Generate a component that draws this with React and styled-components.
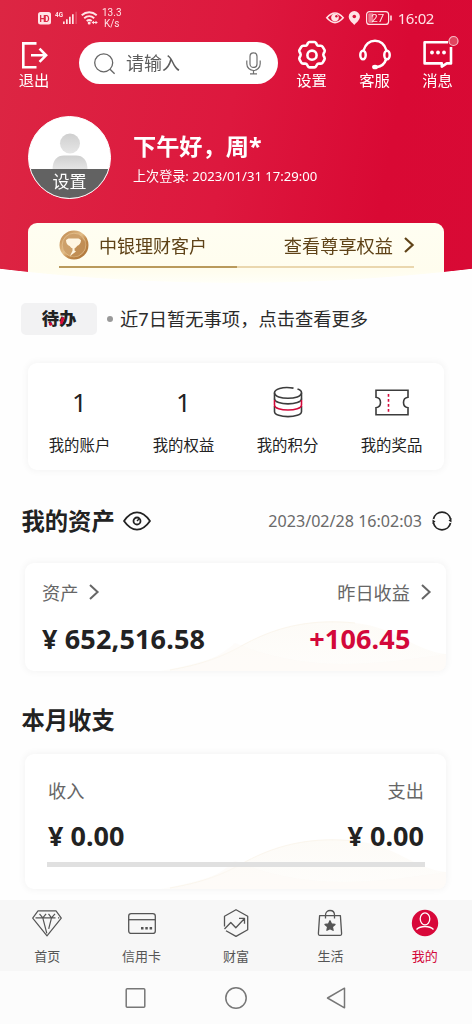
import React from "react";
import styled, { createGlobalStyle } from "styled-components";

const GlobalStyle = createGlobalStyle`
  * {
    box-sizing: border-box;
  }
  body {
    margin: 0;
    background: #fefefe;
    font-family: "Noto Sans", "Noto Sans CJK SC", sans-serif;
    color: #222222;
  }
  svg {
    display: block;
    flex: none;
    overflow: visible;
  }
`;

const Page = styled.div`
  display: flex;
  flex-direction: column;
  width: 472px;
  height: 1024px;
  overflow: hidden;
  background: #fefefe;
  white-space: nowrap;
`;

const Header = styled.header`
  height: 283px;
  flex: none;
  overflow: hidden;
  background: linear-gradient(100deg, #dc2643 0%, #dd183e 48%, #d90934 80%, #d80a35 100%);
  mask-image: radial-gradient(circle 2000px at 50% calc(100% - 1990px), #000 1989.4px, transparent 1990.2px);
`;

const StatusBar = styled.div`
  display: flex;
  align-items: center;
  height: 36px;
  padding: 0 38px;
  color: #ffe3e6;
`;

const StatusSpacer = styled.div`
  flex: 1;
`;

const NetSpeed = styled.div`
  font-family: Roboto, sans-serif;
  font-size: 10px;
  line-height: 11px;
  text-align: center;
  margin-left: 4px;
`;

const Clock = styled.span`
  font-size: 15px;
  line-height: 20px;
  letter-spacing: -0.4px;
  margin-left: 6px;
`;

const TopBar = styled.div`
  display: flex;
  height: 54px;
  padding: 3px 0 0 4px;
`;

const TopAction = styled.button`
  display: flex;
  flex-direction: column;
  align-items: center;
  width: ${(p) => p.$width || 63}px;
  padding: 0;
  border: 0;
  background: none;
  color: #ffffff;
  font-family: inherit;
  font-size: 15.3px;
  font-weight: 400;
  line-height: 18px;
`;

const SearchBox = styled.div`
  display: flex;
  align-items: center;
  width: 199px;
  height: 42px;
  margin: 3px 2px 0 15px;
  padding: 0 17px 0 15px;
  border-radius: 21px;
  background: #ffffff;
`;

const SearchText = styled.span`
  flex: 1;
  margin-left: 11px;
  font-size: 18px;
  line-height: 24px;
  color: #5c5c5c;
`;

const Profile = styled.div`
  display: flex;
  padding: 26px 28px 0;
  color: #ffffff;
`;

const Avatar = styled.div`
  display: flex;
  flex-direction: column;
  align-items: center;
  justify-content: space-between;
  width: 83px;
  height: 83px;
  overflow: hidden;
  border: 1.5px solid #ffffff;
  border-radius: 50%;
  background: #ffffff;
`;

const AvatarLabel = styled.div`
  width: 100%;
  height: 29px;
  background: #626262;
  font-size: 17px;
  line-height: 25px;
  text-align: center;
`;

const Greeting = styled.div`
  padding: 14px 0 0 22px;
`;

const Hello = styled.div`
  font-size: 23.2px;
  font-weight: 700;
  line-height: 32px;
`;

const LastLogin = styled.div`
  margin-top: 4px;
  font-size: 13.1px;
  line-height: 20px;
`;

const MemberCard = styled.div`
  height: 70px;
  margin: 24px 28px 0;
  padding: 0 30px 0 31px;
  border-radius: 9px 9px 0 0;
  background: linear-gradient(180deg, #fffef2 0%, #fffdee 68%, #fffff8 86%);
`;

const MemberRow = styled.div`
  display: flex;
  align-items: center;
  height: 43px;
  color: #5f4318;
  font-size: 18px;
`;

const MemberName = styled.span`
  flex: 1;
  margin-left: 10px;
`;

const MemberLink = styled.span`
  margin-right: 11px;
  font-size: 18.2px;
`;

const MemberLine = styled.div`
  height: 1.5px;
  background: linear-gradient(90deg, #b99a5c 50%, #ead7ae 50%);
`;

const Todo = styled.div`
  display: flex;
  align-items: center;
  height: 32px;
  flex: none;
  margin: 20px 21px 0;
`;

const TodoBadge = styled.div`
  position: relative;
  width: 76px;
  height: 32px;
  border-radius: 5px;
  background: #f2f2f3;
  font-size: 17.3px;
  font-weight: 900;
  line-height: 32px;
  text-align: center;
`;

const TodoAccent = styled.svg`
  position: absolute;
  left: 0;
  top: 0;
`;

const Bullet = styled.i`
  width: 6px;
  height: 6px;
  margin: 0 7px 0 10px;
  border-radius: 50%;
  background: #999999;
`;

const TodoText = styled.span`
  font-size: 18.3px;
  line-height: 26px;
  color: #2b2b2b;
`;

const Card = styled.section`
  position: relative;
  flex: none;
  border-radius: 9px;
  background: #ffffff;
  box-shadow: 0 0 6px 2px rgba(0, 0, 0, 0.035);
`;

const QuickCard = styled(Card)`
  display: grid;
  grid-template-columns: repeat(4, 104px);
  height: 107px;
  margin: 28px 28px 0 27.5px;
`;

const QuickItem = styled.div`
  display: flex;
  flex-direction: column;
  align-items: center;
  padding-top: 19px;
  font-size: 15.4px;
  line-height: 24px;
`;

const QuickTop = styled.div`
  display: flex;
  align-items: center;
  height: 40px;
  margin-bottom: 12px;
  font-size: 26px;
`;

const TitleRow = styled.div`
  display: flex;
  align-items: center;
  height: 30px;
  flex: none;
  margin-top: ${(p) => p.$top}px;
  padding: 0 20px 0 21.5px;
`;

const Title = styled.h2`
  margin: 0 8px 0 0;
  font-size: 23.3px;
  font-weight: 700;
  line-height: 30px;
`;

const UpdateTime = styled.span`
  margin: 0 10px 0 auto;
  font-size: 16.1px;
  color: #6a6a6a;
`;

const MoneyCard = styled(Card)`
  height: ${(p) => p.$height}px;
  margin: ${(p) => p.$top}px 26px 0 25px;
  padding: ${(p) => p.$pad};
`;

const Wave = styled.svg`
  position: absolute;
  right: 0;
  bottom: 0;
`;

const MoneyRow = styled.div`
  position: relative;
  display: flex;
  justify-content: space-between;
`;

const MoneyLabel = styled.div`
  display: flex;
  align-items: center;
  gap: 10.5px;
  height: 28px;
  font-size: 18.2px;
  color: #666666;
`;

const Amount = styled.div`
  margin-top: ${(p) => p.$gap || 15}px;
  font-size: 27px;
  font-weight: 700;
  line-height: 36px;
  letter-spacing: ${(p) => p.$spacing || 0}px;
  color: #222222;
`;

const GainAmount = styled(Amount)`
  margin-left: -28px;
  color: #d3083a;
`;

const RightColumn = styled.div`
  display: flex;
  flex-direction: column;
  align-items: flex-end;
`;

const Track = styled.div`
  position: relative;
  height: 5px;
  margin: 8px -1px 0;
  background: #e0e0e0;
`;

const TabBar = styled.nav`
  display: grid;
  grid-template-columns: repeat(5, 1fr);
  height: 71px;
  flex: none;
  margin-top: 11px;
  background: #f7f7f7;
`;

const Tab = styled.a`
  display: flex;
  flex-direction: column;
  align-items: center;
  padding-top: 8px;
  font-size: 13px;
  line-height: 20px;
  color: ${(p) => (p.$active ? "#d3083a" : "#555555")};

  svg {
    margin-bottom: 8px;
  }
`;

const SystemNav = styled.div`
  display: flex;
  align-items: center;
  justify-content: center;
  gap: 78px;
  flex: 1;
  background: #fcfcfc;
`;

const Chevron = ({ color, width = 2 }) => (
  <svg width="10" height="16" viewBox="0 0 10 16" fill="none" stroke={color} strokeWidth={width}>
    <path d="M1 1l7.6 7L1 15" />
  </svg>
);

const SignalIcons = () => (
  <svg width="60" height="20" viewBox="0 0 60 20" fill="currentColor">
    <rect x="0" y="4" width="13" height="12.5" rx="2.5" />
    <text x="6.5" y="13.6" fontSize="8.5" fontWeight="700" textAnchor="middle" fill="#dc2643" fontFamily="Roboto" textLength="10">HD</text>
    <text x="17" y="8.5" fontSize="8" fontWeight="700" fontFamily="Roboto" textLength="8" lengthAdjust="spacingAndGlyphs">4G</text>
    <path d="M25 13.5h1.7V16H25zM28 11.3h1.7V16H28zM31 8.8h1.7V16H31zM34 6.3h1.7V16H34z" />
    <path d="M37.5 3.7h1.2V16h-1.2z" opacity=".3" />
    <g fill="none" stroke="currentColor" strokeWidth="1.9">
      <path d="M43.7 7.2c4.5-4 10.500-4 15 0M46.200 10.200c3-2.700 7-2.700 10 0M48.700 13c1.500-1.300 3.500-1.300 5 0" />
    </g>
    <circle cx="51.200" cy="15" r="1.500" />
    <path d="M53.500 14.500l2.500-1.800v1.200h1.500v-1.200l2.300 1.800-2.300 1.800v-1.200H56v1.200z" />
  </svg>
);

const StatusRight = () => (
  <svg width="66" height="20" viewBox="0 0 66 20" fill="none">
    <path d="M.8 9.800Q9 .2 17.200 9.800 9 19.400.8 9.800z" stroke="currentColor" strokeWidth="1.600" />
    <circle cx="9" cy="9.600" r="3.800" fill="currentColor" />
    <circle cx="10.400" cy="8.300" r="1.200" fill="#db123a" />
    <path d="M28.300 3a5.600 5.600 0 0 0-5.600 5.600c0 3.600 3.400 6 5.600 8.400 2.200-2.400 5.600-4.800 5.600-8.400A5.600 5.600 0 0 0 28.300 3z" fill="currentColor" />
    <circle cx="28.300" cy="8.500" r="1.800" fill="#db123a" />
    <rect x="40.600" y="3.600" width="22" height="12.800" rx="3" stroke="currentColor" strokeWidth="1.200" />
    <rect x="42.300" y="5.300" width="5" height="9.400" rx="1" fill="currentColor" opacity=".5" />
    <path d="M65 7.500v5" stroke="currentColor" strokeWidth="1.600" />
    <text x="51.700" y="14" fontSize="11.500" textAnchor="middle" fill="currentColor" fontFamily="Roboto">27</text>
  </svg>
);

const ExitIcon = () => (
  <svg width="32" height="32" viewBox="0 0 32 32" fill="none" stroke="#fff" strokeWidth="2.600">
    <path d="M18.500 4.400H5.300v23.800h13.200M13 16.300h15M21.500 9.700l6.600 6.600-6.600 6.600" />
  </svg>
);

const GearIcon = () => (
  <svg width="32" height="32" viewBox="0 0 32 32" fill="none" stroke="#fff" strokeWidth="2.600" strokeLinejoin="round">
    <path d="M13.500 3h5q1 0 1.500 1l1 1.800q.5 1 1.700 1h2.200q1.200 0 1.800 1l1.800 3.100q.5 1 0 2l-.9 1.600q-.6 1.200 0 2.400l.9 1.600q.5 1 0 2l-1.800 3.100q-.6 1-1.800 1h-2.200q-1.200 0-1.700 1l-1 1.800q-.5 1-1.500 1h-5q-1 0-1.500-1l-1-1.800q-.5-1-1.700-1H7.100q-1.200 0-1.800-1l-1.800-3.100q-.5-1 0-2l.9-1.600q.6-1.200 0-2.400l-.9-1.600q-.5-1 0-2l1.800-3.100q.6-1 1.800-1h2.200q1.200 0 1.700-1l1-1.800q.5-1 1.500-1z" />
    <circle cx="16" cy="16.200" r="4.600" />
  </svg>
);

const HeadsetIcon = () => (
  <svg width="32" height="32" viewBox="0 0 32 32" fill="none" stroke="#fff" strokeWidth="2.500">
    <path d="M4.500 11.500C6.500 5 10.800 1.800 16 1.800S25.500 5 27.500 11.500" />
    <ellipse cx="4" cy="16" rx="2.700" ry="4.300" />
    <ellipse cx="28" cy="16" rx="2.700" ry="4.300" />
    <path d="M27 20.500c-1.400 4.400-4.800 7-9.500 7.700" />
    <ellipse cx="16" cy="28" rx="2.900" ry="2.300" fill="#fff" stroke="none" />
  </svg>
);

const MessageIcon = () => (
  <svg width="32" height="32" viewBox="0 0 32 32" fill="none" stroke="#fff" strokeWidth="2.600" strokeLinejoin="round">
    <path d="M26 3.200H2.600v21.200h17.200v3.200l5-3.200h4.200V8" />
    <g fill="#fff" stroke="none">
      <circle cx="10" cy="13.500" r="1.900" />
      <circle cx="16" cy="13.500" r="1.900" />
      <circle cx="22" cy="13.500" r="1.900" />
    </g>
    <circle cx="31.500" cy="2" r="4.500" fill="#e0455f" stroke="#f7b9c3" strokeWidth="1.200" />
  </svg>
);

const SearchIcon = () => (
  <svg width="21" height="21" viewBox="0 0 21 21" fill="none" stroke="#666" strokeWidth="1.300">
    <circle cx="9.700" cy="9.800" r="9" />
    <path d="M16 16.200l4.600 4.500" />
  </svg>
);

const MicIcon = () => (
  <svg width="15" height="23" viewBox="0 0 15 23" fill="none" stroke="#707070" strokeWidth="1.200">
    <rect x="4" y=".9" width="7" height="14.500" rx="3.500" />
    <path d="M.8 8.500v3.300a6.700 6.700 0 0 0 13.400 0V8.500M7.500 18.500v3.300M4 21.900h7" />
  </svg>
);

const Person = () => (
  <svg width="36" height="51" viewBox="0 0 36 51">
    <defs>
      <linearGradient id="person" x1="0" y1="0" x2="0" y2="1">
        <stop offset="0" stopColor="#cfcfcf" />
        <stop offset="1" stopColor="#e6e6e6" />
      </linearGradient>
    </defs>
    <circle cx="18" cy="26.500" r="10" fill="url(#person)" />
    <path d="M.5 53C.5 43 5 38.500 12 38.500h12c7 0 11.500 4.500 11.500 14.500z" fill="url(#person)" />
  </svg>
);

const Medal = () => (
  <svg width="30" height="30" viewBox="0 0 30 30">
    <defs>
      <linearGradient id="medal" x1="0" y1="0" x2="1" y2="1">
        <stop offset="0" stopColor="#b98044" />
        <stop offset=".45" stopColor="#e2bd88" />
        <stop offset=".6" stopColor="#c18a4d" />
        <stop offset="1" stopColor="#a86f34" />
      </linearGradient>
    </defs>
    <circle cx="15" cy="15" r="14.500" fill="url(#medal)" />
    <circle cx="15" cy="15" r="11.800" fill="#cda06a" stroke="#e3c08e" strokeWidth=".8" />
    <path d="M12 26.500L22 8l4.500 4q1 9-7 13.500-3.500 1.700-7.500 1z" fill="#b98248" opacity=".6" />
    <path d="M9.500 8.500h10l2.500 1.500c0 3.500-2 5-4 6-.8 1.500-1.800 2-2.500 2.300v2.200l1.500 1-6 4.500 2.500-5.300v-2.400c-1.200-.5-2-1-2.800-2.300-2.200-1-3.700-2.500-3.700-6z" fill="#fff6e2" />
  </svg>
);

const CoinsIcon = () => (
  <svg width="30" height="32" viewBox="0 0 30 32" fill="none" stroke="#3c3c3c" strokeWidth="1.600">
    <path d="M20.500 2.100C9 .2 1.500 3.400 1.500 6.800c0 7.300 27 7.300 27 0 0-1.600-1.500-2.900-4-3.700" />
    <path d="M1.500 6.800v7M28.500 6.800v7M1.500 20v5.500c0 6.800 27 6.800 27 0V20" />
    <path d="M1.500 12.800c0 6.700 27 6.700 27 0" />
    <path d="M1.500 14v5c0 6.700 27 6.700 27 0v-5" stroke="#d3083a" />
  </svg>
);

const TicketIcon = () => (
  <svg width="34" height="27" viewBox="0 0 34 27" fill="none" stroke="#3c3c3c" strokeWidth="1.600">
    <path d="M1 1.300h32v7c-6 .8-6 9.600 0 10.400v7H1v-7c6-.8 6-9.600 0-10.400z" />
    <path d="M13.500 5v18" stroke="#d3083a" strokeDasharray="2.700 2.300" />
  </svg>
);

const EyeIcon = () => (
  <svg width="28" height="20" viewBox="0 0 28 20" fill="none" stroke="#222" strokeWidth="1.800">
    <path d="M1 10C9-1.500 19-1.500 27 10 19 21.500 9 21.500 1 10z" strokeLinejoin="round" />
    <circle cx="14" cy="10" r="3.500" />
    <path d="M14 10l2-2" strokeWidth="1.400" />
  </svg>
);

const RefreshIcon = () => (
  <svg width="20" height="20" viewBox="0 0 20 20" fill="none" stroke="#222" strokeWidth="1.700">
    <path d="M1.500 8A8.700 8.700 0 0 1 18.500 8M18.500 12A8.700 8.700 0 0 1 1.500 12" />
    <path d="M16.500 9.500l3-2.500v4.500zM3.500 10.500l-3 2.500V8.500z" fill="#222" stroke="none" />
  </svg>
);

const DiamondIcon = () => (
  <svg width="30" height="30" viewBox="0 0 30 30" fill="none" stroke="#555" strokeWidth="1.200" strokeLinejoin="round">
    <path d="M6 2.800h18l5.300 7.300L15 27.800.7 10.100z" />
    <path d="M3.500 9.800h20M26 9.800h1.300M7.500 5.800l3.300 4 4 15.500M10.800 9.800l3.300-4M16.500 5.800l3 4-2.800 11M19.500 9.800l3.500-4" />
  </svg>
);

const CreditCardIcon = () => (
  <svg width="30" height="30" viewBox="0 0 30 30" fill="none" stroke="#555" strokeWidth="1.300">
    <rect x="1.700" y="5.600" width="26.600" height="19.800" rx="2.500" />
    <path d="M1.700 11.700h26.600" />
    <path d="M14 20.200h2.500M18.300 20.200h2.500M22.600 20.200h2.500" strokeWidth="2.600" />
  </svg>
);

const WealthIcon = () => (
  <svg width="30" height="30" viewBox="0 0 30 30" fill="none" stroke="#555" strokeWidth="1.300" strokeLinejoin="round">
    <path d="M3.500 18.500V8.200L15 1.700l11.700 6.500v13.500L15 28.400 5 22.700" />
    <path d="M3.500 21l6.300-6.500 5 5.300 8.500-9M18 10.300h5.500v5.500" />
  </svg>
);

const LifeIcon = () => (
  <svg width="30" height="30" viewBox="0 0 30 30" fill="none" stroke="#555" strokeWidth="1.300" strokeLinejoin="round">
    <path d="M4.600 7.600h20.800l1.200 17.800q.1 2-1.600 2H5q-1.700 0-1.600-2z" />
    <path d="M10.500 10.500V7c0-6 9-6 9 0v3.500" />
    <path d="M15 12.800l1.500 3.200 3.500.4-2.600 2.400.7 3.500-3.100-1.700-3.100 1.700.7-3.500-2.600-2.400 3.500-.4z" fill="#555" />
  </svg>
);

const MineIcon = () => (
  <svg width="30" height="30" viewBox="0 0 30 30" fill="none" stroke="#fff" strokeWidth="1.300">
    <circle cx="15" cy="15" r="13.200" fill="#d8083a" stroke="none" />
    <ellipse cx="15" cy="10.800" rx="4.800" ry="6" />
    <path d="M6.500 21.500c4-4 13-4 17 0" />
  </svg>
);

const tabs = [
  { label: "首页", Icon: DiamondIcon },
  { label: "信用卡", Icon: CreditCardIcon },
  { label: "财富", Icon: WealthIcon },
  { label: "生活", Icon: LifeIcon },
  { label: "我的", Icon: MineIcon, active: true },
];

const quickItems = [
  { label: "我的账户", top: "1" },
  { label: "我的权益", top: "1" },
  { label: "我的积分", top: <CoinsIcon /> },
  { label: "我的奖品", top: <TicketIcon /> },
];

const CardWave = () => (
  <Wave width="286" height="68" viewBox="0 0 286 68">
    <defs>
      <linearGradient id="wave" x1="0" y1="0" x2="0" y2="1">
        <stop offset="0" stopColor="#fdfbf7" />
        <stop offset="1" stopColor="#fefdfb" />
      </linearGradient>
    </defs>
    <path d="M0 68C45 60 65 51 85 41c35-19 70-25 110-21 40 4 60 28 91 31v8q0 9-9 9z" fill="url(#wave)" />
    <path d="M10 67c40-7 57-16 75-26 35-19 70-25 110-21" fill="none" stroke="#fbf6ed" />
    <path d="M75 40c70 30 140 22 211 11v8q0 9-9 9H10c30-5 50-14 65-28z" fill="#fdfaf5" opacity=".5" />
  </Wave>
);

const App = () => {
  return (
    <Page lang="zh-CN">
      <GlobalStyle />
      <Header>
        <StatusBar>
          <SignalIcons />
          <NetSpeed>
            13.3
            <br />
            K/s
          </NetSpeed>
          <StatusSpacer />
          <StatusRight />
          <Clock>16:02</Clock>
        </StatusBar>
        <TopBar>
          <TopAction $width={60}>
            <ExitIcon />
            退出
          </TopAction>
          <SearchBox>
            <SearchIcon />
            <SearchText>请输入</SearchText>
            <MicIcon />
          </SearchBox>
          <TopAction>
            <GearIcon />
            设置
          </TopAction>
          <TopAction>
            <HeadsetIcon />
            客服
          </TopAction>
          <TopAction>
            <MessageIcon />
            消息
          </TopAction>
        </TopBar>
        <Profile>
          <Avatar>
            <Person />
            <AvatarLabel>设置</AvatarLabel>
          </Avatar>
          <Greeting>
            <Hello>下午好，周*</Hello>
            <LastLogin>上次登录: 2023/01/31 17:29:00</LastLogin>
          </Greeting>
        </Profile>
        <MemberCard>
          <MemberRow>
            <Medal />
            <MemberName>中银理财客户</MemberName>
            <MemberLink>查看尊享权益</MemberLink>
            <Chevron color="#5f4318" width={2.2} />
          </MemberRow>
          <MemberLine />
        </MemberCard>
      </Header>

      <Todo>
        <TodoBadge>
          待办
          <TodoAccent width="76" height="32" viewBox="0 0 76 32">
            <circle cx="29.500" cy="21" r="1.700" fill="#d8083a" />
            <path d="M42.300 14.500l-2.300 6.500" stroke="#d8083a" strokeWidth="2.800" />
          </TodoAccent>
        </TodoBadge>
        <Bullet />
        <TodoText>近7日暂无事项，点击查看更多</TodoText>
      </Todo>

      <QuickCard>
        {quickItems.map((q) => (
          <QuickItem key={q.label}>
            <QuickTop>{q.top}</QuickTop>
            {q.label}
          </QuickItem>
        ))}
      </QuickCard>

      <TitleRow $top={36}>
        <Title>我的资产</Title>
        <EyeIcon />
        <UpdateTime>2023/02/28 16:02:03</UpdateTime>
        <RefreshIcon />
      </TitleRow>
      <MoneyCard $top={27} $height={108} $pad="15px 15.5px 0 17px">
        <CardWave />
        <MoneyRow>
          <div>
            <MoneyLabel>
              资产 <Chevron color="#666" />
            </MoneyLabel>
            <Amount $spacing={0.15}>¥ 652,516.58</Amount>
          </div>
          <div>
            <MoneyLabel>
              昨日收益 <Chevron color="#666" />
            </MoneyLabel>
            <GainAmount $spacing={0.15}>+106.45</GainAmount>
          </div>
        </MoneyRow>
      </MoneyCard>

      <TitleRow $top={34}>
        <Title>本月收支</Title>
      </TitleRow>
      <MoneyCard $top={19} $height={135} $pad="22px 22px 0 23px">
        <CardWave />
        <MoneyRow>
          <div>
            <MoneyLabel>收入</MoneyLabel>
            <Amount $gap={14}>¥ 0.00</Amount>
          </div>
          <RightColumn>
            <MoneyLabel>支出</MoneyLabel>
            <Amount $gap={14}>¥ 0.00</Amount>
          </RightColumn>
        </MoneyRow>
        <Track />
      </MoneyCard>

      <TabBar>
        {tabs.map(({ label, Icon, active }) => (
          <Tab key={label} $active={active}>
            <Icon />
            {label}
          </Tab>
        ))}
      </TabBar>
      <SystemNav>
        <svg width="22" height="22" viewBox="0 0 22 22" fill="none" stroke="#777" strokeWidth="1.500">
          <rect x="1.200" y="1.700" width="18.600" height="18.600" rx="1" />
        </svg>
        <svg width="22" height="22" viewBox="0 0 22 22" fill="none" stroke="#777" strokeWidth="1.500">
          <circle cx="11" cy="11" r="10.200" />
        </svg>
        <svg width="22" height="22" viewBox="0 0 22 22" fill="none" stroke="#777" strokeWidth="1.500" strokeLinejoin="round">
          <path d="M19.500 1.200v19.600L2.500 11z" />
        </svg>
      </SystemNav>
    </Page>
  );
};

export default App;
